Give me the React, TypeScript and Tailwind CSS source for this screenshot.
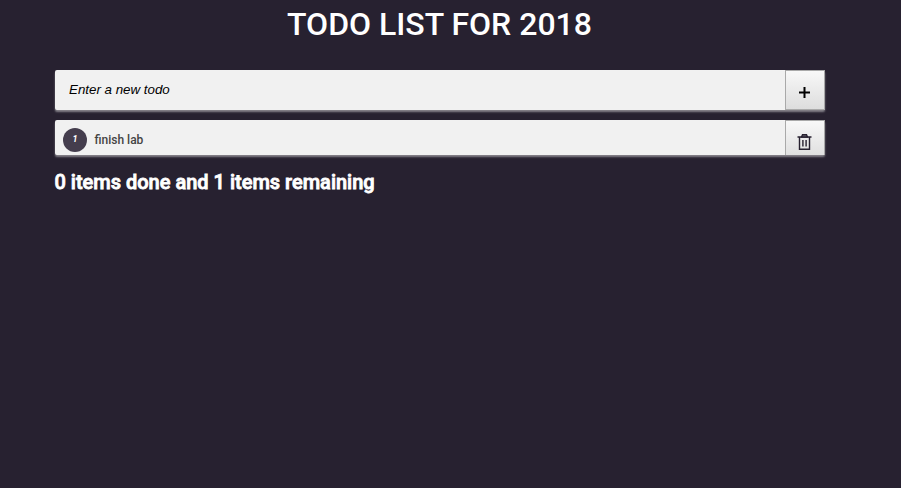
export default function App() {
  return (
    <main className="h-[488px] w-[901px] overflow-hidden bg-[#272130] font-['Roboto',sans-serif]">
      <div className="ml-[55px] flex w-[770px] flex-col">
        <h1 className="mr-px h-[70px] pt-[5px] text-center text-[32px] leading-[38px] font-medium text-white">TODO LIST FOR 2018</h1>
        <form className="flex h-10 rounded-[2px] bg-[#f1f1f1] shadow-[0_2px_2px_0_#85828a]">
          <input placeholder="Enter a new todo" className="min-w-0 flex-1 pl-[14px] font-['Liberation_Sans',sans-serif] text-[13.333px] italic outline-none placeholder:text-black" />
          <button type="button" aria-label="Add" className="flex w-10 items-center justify-center border border-[#a9a9a9] bg-linear-to-b from-[#f8f8f8] to-[#dddddd] pt-[5px] pr-px">
            <svg width="11" height="11" viewBox="0 0 11 11"><path d="M5.5 0v11M0 5.500h11" stroke="#000" strokeWidth="2" /></svg>
          </button>
        </form>
        <div className="mt-[10px] flex h-[35px] rounded-[2px] bg-[#f1f1f1] shadow-[0_2px_2px_0_#85828a]">
          <div className="flex flex-1 items-center gap-[7.5px] pt-[4px] pl-2">
            <span className="flex size-6 items-center justify-center rounded-full bg-[#443d4d] text-[9px] font-bold text-white italic">1</span>
            <span className="text-[12px] font-medium text-[#444444]">finish lab</span>
          </div>
          <button type="button" aria-label="Delete" className="flex w-10 justify-center border border-b-0 border-[#a9a9a9] bg-linear-to-b from-[#f8f8f8] to-[#e0e0e0] pt-[13px] pr-px">
            <svg width="15" height="16" viewBox="0 0 15 16" fill="none" stroke="#272130" strokeWidth="1.4"><path d="M.5 3h14M2.500 3.500v11.700h10V3.500M5.900 6v6.500M9.100 6v6.500" /><path d="M4.500 3l1-2.200h4l1 2.200z" fill="#77727c" /></svg>
          </button>
        </div>
        <h2 className="mt-[15px] ml-[-0.5px] text-[20px] leading-6 font-medium text-white [-webkit-text-stroke:0.8px_white]">0 items done and 1 items remaining</h2>
      </div>
    </main>
  );
}
